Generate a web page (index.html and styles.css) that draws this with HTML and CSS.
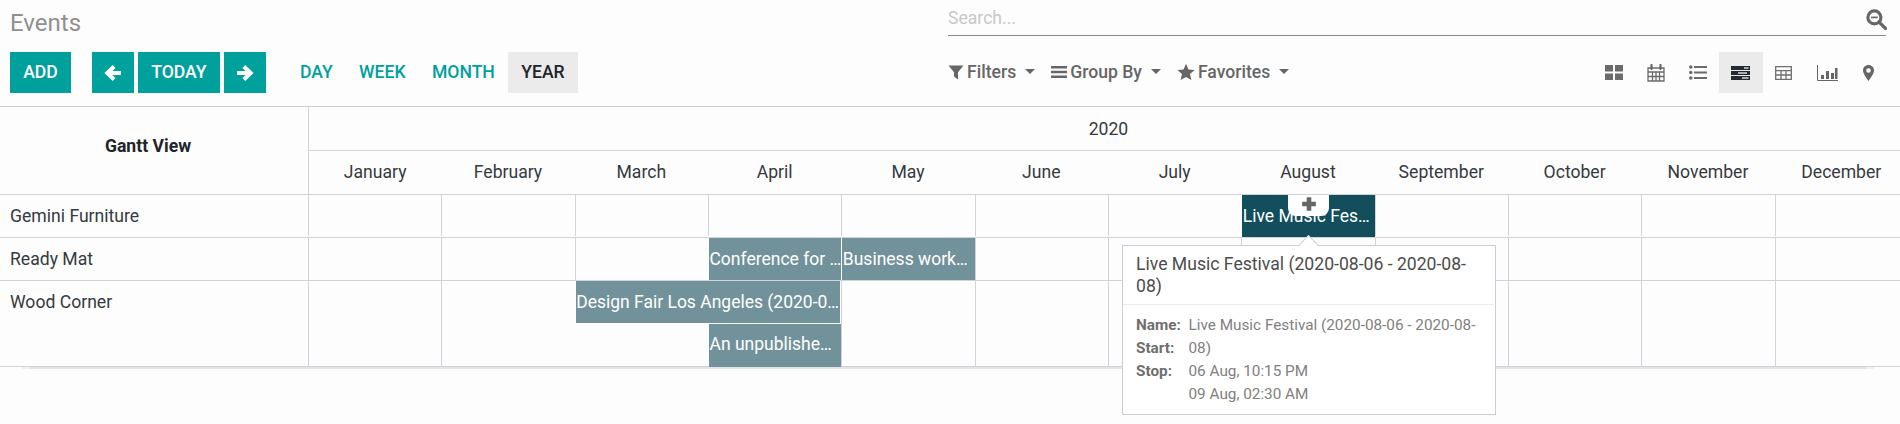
FILE: index.html
```html
<!DOCTYPE html>
<html lang="en">
<head>
<meta charset="utf-8">
<title>Events</title>
<link rel="stylesheet" href="styles.css">
</head>
<body>
<header class="panel">
  <div class="crumb">Events</div>
  <div class="search">
    <span class="placeholder">Search...</span>
    <svg class="search-icon" viewBox="0 0 20 20" width="21" height="21"><circle cx="8" cy="8" r="6.2" fill="none" stroke="#666" stroke-width="3"/><path d="M12.5 12.5L18.5 18.5" stroke="#666" stroke-width="3.2" stroke-linecap="round"/><path d="M4.8 8h6.4" stroke="#666" stroke-width="1.6"/></svg>
  </div>
  <div class="actions">
    <button class="btn primary add">ADD</button>
    <div class="nav">
      <button class="btn primary arrow"><svg viewBox="0 0 16 16" width="18" height="18"><path d="M9 2.2L3 8l6 5.8M3.4 8H15" fill="none" stroke="#fff" stroke-width="3.6"/></svg></button>
      <button class="btn primary">TODAY</button>
      <button class="btn primary arrow"><svg viewBox="0 0 16 16" width="18" height="18"><path d="M7 2.2L13 8l-6 5.8M12.6 8H1" fill="none" stroke="#fff" stroke-width="3.6"/></svg></button>
    </div>
    <div class="scales">
      <button class="btn link">DAY</button>
      <button class="btn link">WEEK</button>
      <button class="btn link">MONTH</button>
      <button class="btn current">YEAR</button>
    </div>
  </div>
  <div class="tools">
    <div class="filters">
      <button class="drop"><svg viewBox="0 0 16 16" width="16" height="16"><path d="M.5 1.5h15L10 8.2V15.5L6 12.6V8.2z" fill="#666"/></svg><span class="drop-label">Filters</span><i class="caret"></i></button>
      <button class="drop"><svg viewBox="0 0 16 16" width="16" height="16"><path d="M0 2h16v2.6H0zM0 6.7h16v2.6H0zM0 11.4h16V14H0z" fill="#666"/></svg><span class="drop-label">Group By</span><i class="caret"></i></button>
      <button class="drop"><svg viewBox="0 0 18 18" width="18" height="18"><path d="M9 .8l2.5 5.6 6.1.6-4.6 4 1.4 6L9 13.9 3.6 17l1.4-6-4.6-4 6.1-.6z" fill="#666"/></svg><span class="drop-label">Favorites</span><i class="caret"></i></button>
    </div>
    <div class="views">
      <button class="view"><svg viewBox="0 0 18 15" width="18" height="15"><path d="M0 0h8v6.5H0zM10 0h8v6.5h-8zM0 8.5h8V15H0zM10 8.5h8V15h-8z" fill="#6b6b6b"/></svg></button>
      <button class="view"><svg viewBox="0 0 18 18" width="18" height="18"><path d="M1 4h16v13H1zM1 8h16M1 12.5h16M5.5 8v9M9 8v9M12.5 8v9" fill="none" stroke="#6b6b6b" stroke-width="1.3"/><path d="M4.5 1v4M13.5 1v4" stroke="#666" stroke-width="2.2" stroke-linecap="round"/></svg></button>
      <button class="view"><svg viewBox="0 0 18 15" width="18" height="15"><circle cx="1.8" cy="2" r="1.8" fill="#6b6b6b"/><circle cx="1.8" cy="7.5" r="1.8" fill="#6b6b6b"/><circle cx="1.8" cy="13" r="1.8" fill="#6b6b6b"/><path d="M5 .9h13v2.2H5zM5 6.4h13v2.2H5zM5 11.900h13v2.200H5z" fill="#6b6b6b"/></svg></button>
      <button class="view active"><svg viewBox="0 0 19 14" width="19" height="14"><path d="M0 0h19v4H0zM0 5h19v4H0zM0 10h19v4H0z" fill="#252a30"/><path d="M13 1.2h4.5v1.6H13zM7 6.2h9v1.6H7zM11 11.2h6.5v1.6H11z" fill="#d8d8d8"/></svg></button>
      <button class="view"><svg viewBox="0 0 17 14" width="17" height="14"><path d="M.7.7h15.6v12.6H.7zM.7 4.600h15.600M.7 9h15.600M6 4.600v8.700M11 4.600v8.700" fill="none" stroke="#6f6f6f" stroke-width="1.3"/></svg></button>
      <button class="view shift-graph"><svg viewBox="0 0 21 16" width="21" height="16"><path d="M.5 0v15.500H21" fill="none" stroke="#666" stroke-width="1"/><path d="M4 10h3v4H4zM9 6h3v8H9zM14 8h3v6h-3zM18 3h2.500v11H18z" fill="#666"/></svg></button>
      <button class="view"><svg viewBox="0 0 11 16" width="11" height="16"><path fill-rule="evenodd" d="M5.500 0C2.500 0 0 2.400 0 5.400c0 3 3.700 7.800 5.500 10.600C7.300 13.200 11 8.400 11 5.400 11 2.400 8.500 0 5.500 0zm0 3.200a2.300 2.300 0 1 1 0 4.600 2.300 2.300 0 0 1 0-4.600z" fill="#666"/></svg></button>
    </div>
  </div>
</header>
<main class="gantt">
  <div class="head">
    <div class="head-title">Gantt View</div>
    <div class="year">2020</div>
    <div class="month">January</div><div class="month">February</div><div class="month">March</div><div class="month">April</div><div class="month">May</div><div class="month">June</div><div class="month">July</div><div class="month">August</div><div class="month">September</div><div class="month">October</div><div class="month">November</div><div class="month">December</div>
  </div>
  <div class="row">
    <div class="name">Gemini Furniture</div>
    <div class="cell short"></div><div class="cell short"></div><div class="cell short"></div><div class="cell short"></div><div class="cell short"></div><div class="cell short"></div><div class="cell short"></div><div class="cell short"></div><div class="cell short"></div><div class="cell short"></div><div class="cell short"></div><div class="cell short"></div>
    <div class="bar dark m8">Live Music Festival (2020-08-06 - 2020-08-08)<span class="add-tab"><svg viewBox="0 0 14 14" width="16" height="16"><path d="M5 1h4v4h4v4H9v4H5V9H1V5h4z" fill="#666"/></svg></span></div>
  </div>
  <div class="row">
    <div class="name">Ready Mat</div>
    <div class="cell"></div><div class="cell"></div><div class="cell"></div><div class="cell"></div><div class="cell"></div><div class="cell"></div><div class="cell"></div><div class="cell"></div><div class="cell"></div><div class="cell"></div><div class="cell"></div><div class="cell"></div>
    <div class="bar m4">Conference for Architects (2020-04-02)</div>
    <div class="bar m5">Business workshops (2020-05-04)</div>
  </div>
  <div class="row tall">
    <div class="name">Wood Corner</div>
    <div class="cell"></div><div class="cell"></div><div class="cell"></div><div class="cell"></div><div class="cell"></div><div class="cell"></div><div class="cell"></div><div class="cell"></div><div class="cell"></div><div class="cell"></div><div class="cell"></div><div class="cell"></div>
    <div class="bar m3 span2 top">Design Fair Los Angeles (2020-03-05 - 2020-04-10)</div>
    <div class="bar m4 lower">An unpublished event (2020-04-20)</div>
  </div>
  <div class="shadow"></div>
</main>
<aside class="popover">
  <div class="pop-title">Live Music Festival (2020-08-06 - 2020-08-08)</div>
  <div class="pop-body">
    <div class="pop-labels"><div>Name:</div><div>Start:</div><div>Stop:</div></div>
    <div class="pop-values"><div>Live Music Festival (2020-08-06 - 2020-08-08)</div><div>06 Aug, 10:15 PM</div><div>09 Aug, 02:30 AM</div></div>
  </div>
</aside>
</body>
</html>
```
FILE: styles.css
```css
* { box-sizing: border-box; }
html, body { margin: 0; height: 100%; overflow: hidden; background: #fdfdfd; }
body { position: relative; font-family: Roboto, "Liberation Sans", sans-serif; font-size: 17.6px; color: #343a40; }
button { font: inherit; border: 0; background: none; padding: 0; margin: 0; }

.panel { height: 106px; padding: 0 10px; display: grid; grid-template-columns: 938px 1fr; grid-template-rows: 52px 41px; }
.crumb { font-size: 24px; line-height: 46px; color: #8f8f8f; }
.search { position: relative; height: 36px; margin-right: 4px; border-bottom: 1px solid #8a8a8a; display: flex; align-items: center; justify-content: space-between; }
.placeholder { color: #c8c8c8; padding-top: 1px; }
.search-icon { margin-top: 4px; margin-right: -1px; flex: none; }

.actions, .tools, .nav, .scales, .filters, .views, .drop { display: flex; align-items: center; }
.actions { gap: 21px; height: 41px; }
.nav { gap: 4px; }
.btn { height: 41px; padding: 0 13.2px 2px; font-weight: 500; white-space: nowrap; }
.primary { background: #00a09d; color: #fff; }
.arrow { width: 42px; padding: 0; display: flex; align-items: center; justify-content: center; }
.link { color: #00a09d; }
.current { background: #ebebeb; color: #212529; }

.tools { justify-content: space-between; height: 41px; }
.filters { gap: 16px; }
.drop { color: #666; font-weight: 500; height: 41px; padding-bottom: 2px; }
.drop-label { margin-left: 3px; }
.caret { margin-left: 9px; width: 0; height: 0; border-left: 5.5px solid transparent; border-right: 5.5px solid transparent; border-top: 5.5px solid #666; }
.views { gap: 0; }
.view { width: 44px; height: 41px; margin-left: -1.6px; display: flex; align-items: center; justify-content: center; }
.shift-graph { padding-left: 3px; }
.active { background: #ebebeb; }

.gantt { position: relative; width: 1908px; border-top: 1px solid #cfcfcf; }
.head { display: grid; grid-template-columns: 308px repeat(12, 133.333px); grid-template-rows: 44px 43px; border-bottom: 1px solid #ced4da; }
.head-title { grid-row: 1 / 3; display: flex; align-items: center; justify-content: center; padding: 0 12px 9px 0; font-weight: 700; color: #212529; }
.year { grid-column: 2 / 14; display: flex; align-items: center; justify-content: center; border-left: 1px solid #ced4da; border-bottom: 1px solid #ced4da; }
.month { display: flex; align-items: center; justify-content: center; padding-bottom: 2px; }
.month:nth-child(3) { border-left: 1px solid #ced4da; }

.row { display: grid; grid-template-columns: 308px repeat(12, 133.333px); grid-template-rows: 42px; border-bottom: 1px solid #ced4da; }
.row.tall { grid-template-rows: 43px 42px; }
.name { grid-row: 1 / -1; grid-column: 1; padding-left: 10px; line-height: 42px; }
.cell { grid-row: 1 / -1; border-left: 1px solid #ced4da; }
.cell.short { margin-bottom: 1px; }
.row > .cell:nth-child(2) { grid-column: 2; }

.bar { grid-row: 1; position: relative; min-width: 0; margin-left: 1px; padding-left: 0.5px; font-size: 17.5px; line-height: 42px; color: #fff; background: #72929b; white-space: nowrap; overflow: hidden; text-overflow: ellipsis; }
.dark { background: #124e5c; }
.m3 { grid-column: 4; }
.m4 { grid-column: 5; }
.m5 { grid-column: 6; }
.m8 { grid-column: 9; }
.span2 { grid-column: 4 / span 2; margin-right: 1px; }
.top { height: 42px; }
.lower { grid-row: 2; height: 43px; line-height: 40px; }
.add-tab { position: absolute; left: 46px; top: 0; width: 41px; height: 21px; padding-bottom: 3px; background: #fff; border-radius: 0 0 8px 8px; display: flex; align-items: center; justify-content: center; }
.shadow { height: 2px; margin-left: 22px; width: 1852px; background: linear-gradient(90deg, #f0f0f0 8px, #e4e4e6 8px, #e4e4e6 calc(100% - 8px), #f0f0f0 calc(100% - 8px)); }

.popover { position: absolute; left: 1122px; top: 245px; width: 374px; height: 170px; background: #fff; border: 1px solid #c9cdd6; }
.popover::before { content: ""; position: absolute; left: 178px; top: -8px; width: 14px; height: 14px; background: #fff; border-left: 1px solid #c9cdd6; border-top: 1px solid #c9cdd6; transform: rotate(45deg); }
.pop-title { position: relative; padding: 8px 13px 7px; font-size: 17.6px; line-height: 21.5px; color: #4c4c4c; border-bottom: 1px solid #ebebeb; margin-right: 1px; }
.pop-body { display: flex; padding: 9px 13px; font-size: 15.3px; line-height: 23px; color: #808080; }
.pop-labels { width: 52.5px; flex: none; font-weight: 700; color: #6f6f6f; }
```
